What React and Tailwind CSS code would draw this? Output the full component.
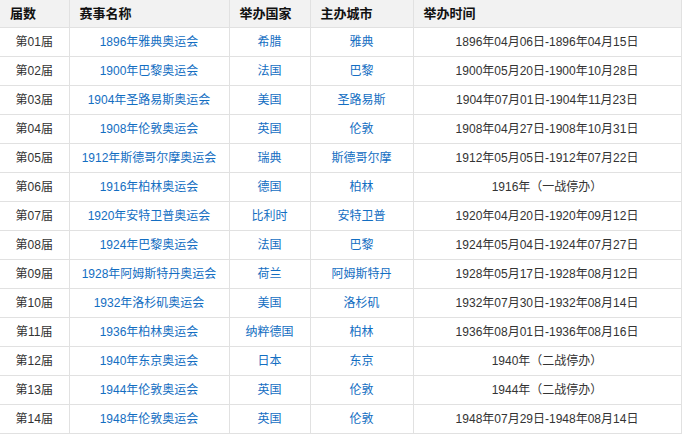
import React from "react";

const rows = [
  ["第01届", "1896年雅典奥运会", "希腊", "雅典", "1896年04月06日-1896年04月15日"],
  ["第02届", "1900年巴黎奥运会", "法国", "巴黎", "1900年05月20日-1900年10月28日"],
  ["第03届", "1904年圣路易斯奥运会", "美国", "圣路易斯", "1904年07月01日-1904年11月23日"],
  ["第04届", "1908年伦敦奥运会", "英国", "伦敦", "1908年04月27日-1908年10月31日"],
  ["第05届", "1912年斯德哥尔摩奥运会", "瑞典", "斯德哥尔摩", "1912年05月05日-1912年07月22日"],
  ["第06届", "1916年柏林奥运会", "德国", "柏林", "1916年（一战停办）"],
  ["第07届", "1920年安特卫普奥运会", "比利时", "安特卫普", "1920年04月20日-1920年09月12日"],
  ["第08届", "1924年巴黎奥运会", "法国", "巴黎", "1924年05月04日-1924年07月27日"],
  ["第09届", "1928年阿姆斯特丹奥运会", "荷兰", "阿姆斯特丹", "1928年05月17日-1928年08月12日"],
  ["第10届", "1932年洛杉矶奥运会", "美国", "洛杉矶", "1932年07月30日-1932年08月14日"],
  ["第11届", "1936年柏林奥运会", "纳粹德国", "柏林", "1936年08月01日-1936年08月16日"],
  ["第12届", "1940年东京奥运会", "日本", "东京", "1940年（二战停办）"],
  ["第13届", "1944年伦敦奥运会", "英国", "伦敦", "1944年（二战停办）"],
  ["第14届", "1948年伦敦奥运会", "英国", "伦敦", "1948年07月29日-1948年08月14日"],
];

const headers = ["届数", "赛事名称", "举办国家", "主办城市", "举办时间"];

export default function App() {
  return (
    <div className="w-[684px] h-[434px] bg-white overflow-hidden font-['Liberation_Sans','Noto_Sans_CJK_SC',sans-serif]">
      <table className="table-fixed border-collapse w-[681px]">
        <colgroup>
          <col className="w-[69px]" />
          <col className="w-[160px]" />
          <col className="w-[81px]" />
          <col className="w-[103px]" />
          <col className="w-[268px]" />
        </colgroup>
        <thead>
          <tr className="h-[27px] bg-[#f2f2f2]">
            {headers.map((h, i) => (
              <th
                key={i}
                className={`border-b border-[#e1e1e1] px-[10px] text-left text-[13px] font-bold text-[#111] ${i > 0 ? "border-l" : ""} ${i === 4 ? "border-r" : ""}`}
              >
                {h}
              </th>
            ))}
          </tr>
        </thead>
        <tbody>
          {rows.map((r, idx) => (
            <tr key={idx} className="h-[29px]">
              <td className="border-b border-[#e1e1e1] text-center text-[12px] text-[#333]">{r[0]}</td>
              <td className="border-b border-l border-[#e1e1e1] text-center text-[12px] text-[#136ec2]">{r[1]}</td>
              <td className="border-b border-l border-[#e1e1e1] text-center text-[12px] text-[#136ec2]">{r[2]}</td>
              <td className="border-b border-l border-[#e1e1e1] text-center text-[12px] text-[#136ec2]">{r[3]}</td>
              <td className="border-b border-l border-r border-[#e1e1e1] text-center text-[12px] text-[#333]">{r[4]}</td>
            </tr>
          ))}
        </tbody>
      </table>
    </div>
  );
}
